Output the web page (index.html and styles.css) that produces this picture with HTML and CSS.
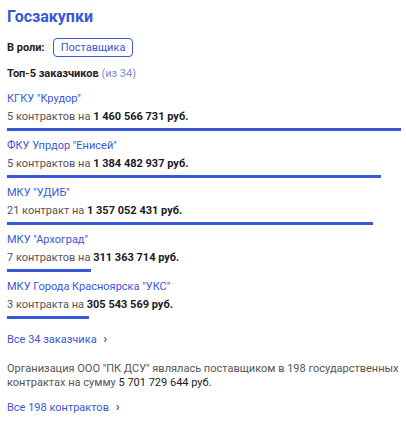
FILE: index.html
```html
<!DOCTYPE html>
<html lang="ru">
<head>
<meta charset="utf-8">
<title>Госзакупки</title>
<link rel="stylesheet" href="styles.css">
</head>
<body>
<div class="card">
  <h2 class="title">Госзакупки</h2>
  <div class="role">
    <span class="role-label">В роли:</span>
    <span class="badge">Поставщика</span>
  </div>
  <div class="top">Топ-5 заказчиков <span class="muted">(из 34)</span></div>
  <ul class="list">
    <li class="item">
      <a class="name" href="#">КГКУ "Крудор"</a>
      <div class="sum">5 контрактов на <b>1 460 566 731 руб.</b></div>
      <div class="bar" style="width:100%"></div>
    </li>
    <li class="item">
      <a class="name" href="#">ФКУ Упрдор "Енисей"</a>
      <div class="sum">5 контрактов на <b>1 384 482 937 руб.</b></div>
      <div class="bar" style="width:94.8%"></div>
    </li>
    <li class="item">
      <a class="name" href="#">МКУ "УДИБ"</a>
      <div class="sum">21 контракт на <b>1 357 052 431 руб.</b></div>
      <div class="bar" style="width:92.9%"></div>
    </li>
    <li class="item">
      <a class="name" href="#">МКУ "Архоград"</a>
      <div class="sum">7 контрактов на <b>311 363 714 руб.</b></div>
      <div class="bar" style="width:21.3%"></div>
    </li>
    <li class="item">
      <a class="name" href="#">МКУ Города Красноярска "УКС"</a>
      <div class="sum">3 контракта на <b>305 543 569 руб.</b></div>
      <div class="bar" style="width:20.9%"></div>
    </li>
  </ul>
  <a class="more" href="#">Все 34 заказчика <span class="chev">›</span></a>
  <p class="desc">Организация ООО "ПК ДСУ" являлась поставщиком в 198 государственных контрактах на сумму <span class="dark">5 701 729 644 руб.</span></p>
  <a class="more more-last" href="#">Все 198 контрактов <span class="chev">›</span></a>
</div>
</body>
</html>
```
FILE: styles.css
```css
* { box-sizing: border-box; }
body {
  margin: 0;
  background: #fff;
  font-family: Roboto, "Noto Sans", sans-serif;
  color: #555;
  font-size: 11px;
}
.card {
  padding: 6px 5px 0 7px;
  display: flex;
  flex-direction: column;
  align-items: flex-start;
}
.title {
  margin: 0;
  font-size: 16px;
  font-weight: 700;
  color: #3a57d6;
  line-height: 22px;
}
.role {
  margin-top: 10px;
  display: flex;
  align-items: center;
  gap: 8px;
}
.role-label {
  font-weight: 700;
  color: #222;
}
.badge {
  border: 1px solid #3a57d6;
  border-radius: 4px;
  color: #3a57d6;
  padding: 1px 7px 1px;
  line-height: 15px;
}
.top {
  margin-top: 9px;
  font-weight: 700;
  color: #222;
  line-height: 16px;
}
.muted { font-weight: 400; color: #7b8bd8; }
.list {
  list-style: none;
  margin: 8px 0 0;
  padding: 0;
  width: 100%;
}
.item {
  display: flex;
  flex-direction: column;
  align-items: flex-start;
  margin-bottom: 6px;
}
.name {
  color: #3a57d6;
  text-decoration: none;
  line-height: 18px;
}
.sum {
  line-height: 18px;
}
.sum b { color: #1b1b2a; font-weight: 700; }
.bar {
  height: 3px;
  background: #3a57d6;
  margin-top: 2px;
}
.more {
  color: #3a57d6;
  text-decoration: none;
  line-height: 18px;
  margin-top: 5px;
}
.chev { margin-left: 4px; font-size: 13px; font-weight: 700; }
.desc {
  margin: 13px 0 0;
  line-height: 14px;
}
.dark { color: #1b1b2a; }
.more-last { margin-top: 8px; }
```
